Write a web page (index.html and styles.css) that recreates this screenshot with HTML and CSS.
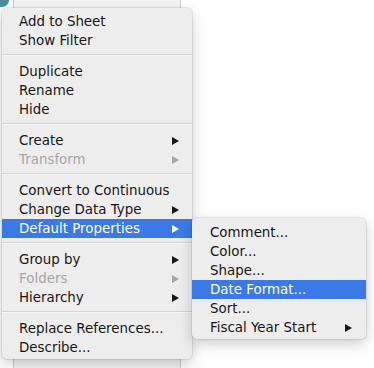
FILE: index.html
```html
<!DOCTYPE html>
<html>
<head>
<meta charset="utf-8">
<link rel="stylesheet" href="styles.css">
</head>
<body>
<div class="window"></div>
<div class="blob"></div>
<div class="menu main">
  <div class="item">Add to Sheet</div>
  <div class="item">Show Filter</div>
  <div class="sep"></div>
  <div class="item">Duplicate</div>
  <div class="item">Rename</div>
  <div class="item">Hide</div>
  <div class="sep"></div>
  <div class="item sub">Create<span class="arrow"></span></div>
  <div class="item sub disabled">Transform<span class="arrow"></span></div>
  <div class="sep"></div>
  <div class="item">Convert to Continuous</div>
  <div class="item sub">Change Data Type<span class="arrow"></span></div>
  <div class="item sub active">Default Properties<span class="arrow"></span></div>
  <div class="sep"></div>
  <div class="item sub">Group by<span class="arrow"></span></div>
  <div class="item sub disabled">Folders<span class="arrow"></span></div>
  <div class="item sub">Hierarchy<span class="arrow"></span></div>
  <div class="sep"></div>
  <div class="item">Replace References...</div>
  <div class="item">Describe...</div>
</div>
<div class="menu submenu">
  <div class="item">Comment...</div>
  <div class="item">Color...</div>
  <div class="item">Shape...</div>
  <div class="item active">Date Format...</div>
  <div class="item">Sort...</div>
  <div class="item sub">Fiscal Year Start<span class="arrow"></span></div>
</div>
</body>
</html>
```
FILE: styles.css
```css
html, body {
  margin: 0;
  padding: 0;
  width: 374px;
  height: 368px;
  overflow: hidden;
  background: #ffffff;
  font-family: "DejaVu Sans", "Liberation Sans", sans-serif;
}
body {
  position: relative;
}
.window {
  position: absolute;
  left: 13px;
  top: 0;
  bottom: 0;
  width: 166px;
  border-left: 1px solid #cdcdcd;
  border-right: 1px solid #cdcdcd;
  background: #f3f3f3;
}
.blob {
  position: absolute;
  left: 0;
  top: 0;
  width: 9px;
  height: 7px;
  border-bottom-right-radius: 8px;
  background: #4a8e9b;
}
.menu {
  position: absolute;
  background: #ededed;
  border-radius: 5px;
  box-shadow: 0 0 0 1px rgba(0,0,0,0.08), 0 5px 14px rgba(0,0,0,0.2);
  font-size: 13.4px;
  color: #161616;
}
.main {
  left: 2px;
  top: 8px;
  width: 190px;
  padding: 4px 0 2px;
}
.submenu {
  left: 192px;
  top: 218px;
  width: 174px;
  padding: 5px 0 2px;
}
.item {
  height: 19px;
  line-height: 19px;
  padding-left: 17px;
  padding-right: 13px;
  display: flex;
  align-items: center;
  justify-content: space-between;
  white-space: nowrap;
}
.submenu .item {
  padding-left: 18px;
  padding-right: 14px;
}
.item.disabled {
  color: #a6a6a6;
}
.item.active {
  background: #3b7ae6;
  color: #ffffff;
}
.arrow {
  width: 0;
  height: 0;
  border-top: 4px solid transparent;
  border-bottom: 4px solid transparent;
  border-left: 7px solid #161616;
}
.disabled .arrow {
  border-left-color: #a6a6a6;
}
.active .arrow {
  border-left-color: #ffffff;
}
.sep {
  height: 1px;
  margin: 4px 0 6px;
  background: #d4d4d4;
  border-bottom: 1px solid #f8f8f8;
}
```
